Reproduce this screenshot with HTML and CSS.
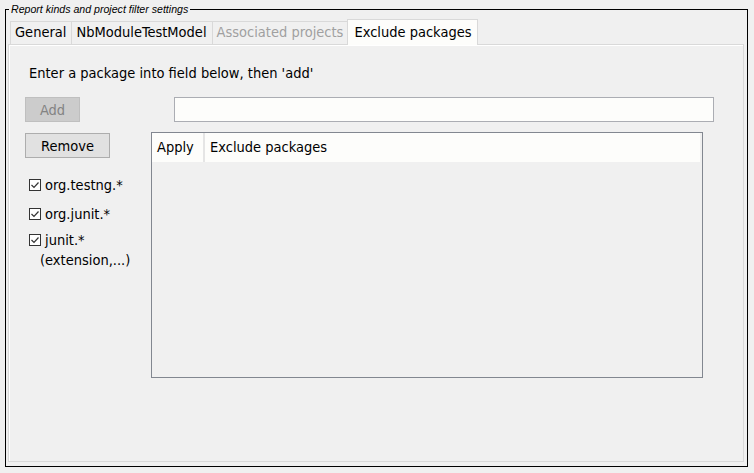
FILE: index.html
```html
<!DOCTYPE html>
<html>
<head>
<meta charset="utf-8">
<link rel="stylesheet" href="styles.css">
</head>
<body>
<div class="frame">
  <div class="legend">Report kinds and project filter settings</div>
  <div class="tabs">
    <div class="tab">General</div>
    <div class="tab">NbModuleTestModel</div>
    <div class="tab disabled">Associated projects</div>
    <div class="tab selected">Exclude packages</div>
  </div>
  <div class="panel">
    <div class="hint">Enter a package into field below, then 'add'</div>
    <div class="row-add">
      <button class="btn btn-add" disabled>Add</button>
      <input class="field" type="text">
    </div>
    <div class="row-main">
      <div class="side">
        <button class="btn btn-remove">Remove</button>
        <div class="checks">
          <div class="check c1">
            <svg class="box" width="12" height="12" viewBox="0 0 12 12"><rect x="0.5" y="0.5" width="11" height="11" fill="#fff" stroke="#333"/><path d="M2.5 6 L5 8.5 L9.5 3.5" fill="none" stroke="#333" stroke-width="1.2"/></svg>
            <span>org.testng.*</span>
          </div>
          <div class="check c2">
            <svg class="box" width="12" height="12" viewBox="0 0 12 12"><rect x="0.5" y="0.5" width="11" height="11" fill="#fff" stroke="#333"/><path d="M2.5 6 L5 8.5 L9.5 3.5" fill="none" stroke="#333" stroke-width="1.2"/></svg>
            <span>org.junit.*</span>
          </div>
          <div class="check c3">
            <svg class="box" width="12" height="12" viewBox="0 0 12 12"><rect x="0.5" y="0.5" width="11" height="11" fill="#fff" stroke="#333"/><path d="M2.5 6 L5 8.5 L9.5 3.5" fill="none" stroke="#333" stroke-width="1.2"/></svg>
            <span>junit.*</span>
          </div>
          <div class="check-cont">(extension,...)</div>
        </div>
      </div>
      <div class="table">
        <div class="thead">
          <div class="th th-apply">Apply</div>
          <div class="th th-pkg">Exclude packages</div>
        </div>
      </div>
    </div>
  </div>
</div>
</body>
</html>
```
FILE: styles.css
```css
* { box-sizing: border-box; }
html, body { margin: 0; padding: 0; }
body {
  background: #f0f0f0;
  font-family: "DejaVu Sans Condensed", "Liberation Sans", sans-serif;
  font-size: 14.5px;
  color: #000;
  width: 754px;
  height: 473px;
  overflow: hidden;
}
.frame {
  position: relative;
  margin: 9px 6px 0 5px;
  height: 458px;
  border: 1px solid #000;
  padding: 9px 2px 4px 2px;
  display: flex;
  flex-direction: column;
}
.legend {
  position: absolute;
  top: -8px;
  left: 3px;
  padding: 0 2px;
  background: #f0f0f0;
  font-family: "Liberation Sans", sans-serif;
  font-style: italic;
  font-size: 10.6px;
  line-height: 14px;
  color: #000;
}
.tabs {
  display: flex;
  align-items: flex-end;
  height: 25px;
  margin-left: 2px;
  position: relative;
  z-index: 2;
}
.tab {
  height: 23px;
  line-height: 21px;
  padding: 0 5px 0 4px;
  border: 1px solid #d9d9d9;
  border-bottom: none;
  border-left: none;
  background: #f0f0f0;
  white-space: nowrap;
}
.tab:first-child { border-left: 1px solid #d9d9d9; }
.tab.disabled { color: #a0a0a0; padding: 0 4px 0 4px; }
.tab.selected {
  height: 26px;
  line-height: 24px;
  margin-bottom: -1px;
  padding: 0 5px 0 6px;
  background: #fdfdfb;
  border-left: 1px solid #d9d9d9;
  margin-left: -1px;
}
.panel {
  flex: 1;
  border: 1px solid #d9d9d9;
  box-shadow: inset 1px 1px 0 #fff;
  margin-right: 1px;
  padding: 20px 0 0 16px;
}
.hint {
  line-height: 16px;
  padding-left: 4px;
}
.row-add {
  display: flex;
  margin-top: 16px;
  height: 25px;
}
.btn {
  font-family: inherit;
  font-size: 14.5px;
  height: 25px;
  padding: 0;
  margin: 0;
  border: 1px solid #adadad;
  background: #e1e1e1;
  color: #000;
}
.btn-add {
  width: 55px;
  background: #cccccc;
  border-color: #bfbfbf;
  color: #838383;
}
.field {
  margin: 0 0 0 94px;
  width: 540px;
  height: 25px;
  border: 1px solid #abadb3;
  background: #fdfdfb;
  padding: 0;
}
.row-main {
  display: flex;
  margin-top: 10px;
}
.side {
  width: 126px;
  flex: none;
}
.btn-remove {
  width: 85px;
  margin-top: 1px;
}
.checks { margin-top: 17px; padding-left: 4px; }
.check {
  display: flex;
  align-items: center;
  height: 20px;
  line-height: 20px;
}
.check .box { flex: none; margin-right: 4px; }
.c1 { margin-bottom: 9px; }
.c2 { margin-bottom: 6px; }
.check-cont {
  line-height: 20px;
  padding-left: 11px;
  white-space: nowrap;
}
.table {
  width: 552px;
  height: 246px;
  border: 1px solid #828790;
  padding-right: 2px;
}
.thead {
  display: flex;
  height: 29px;
  background: #fdfdfb;
}
.th {
  line-height: 29px;
  padding-left: 5px;
}
.th-apply {
  width: 53px;
  border-right: 2px solid #e5e5e5;
}
```
